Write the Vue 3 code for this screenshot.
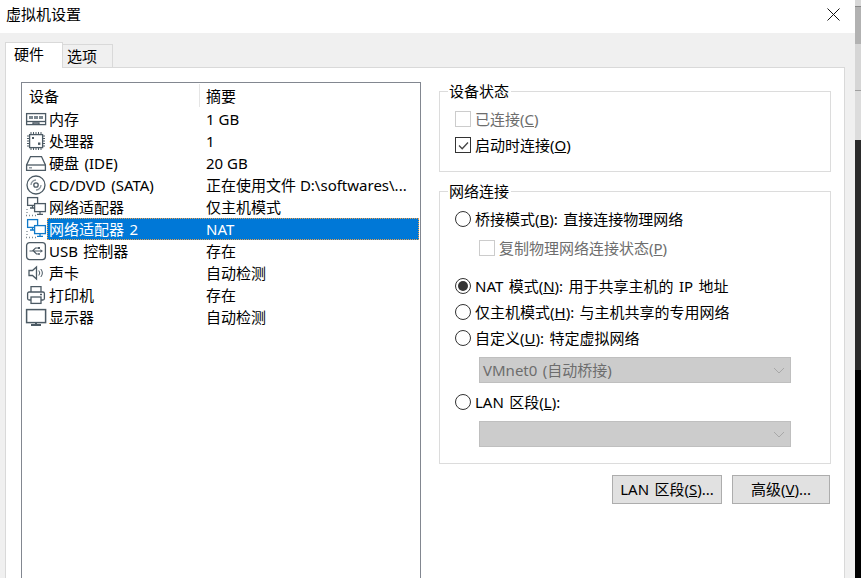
<script setup>
const rows = [
  { kind: 'ram', name: '内存', value: '1 GB' },
  { kind: 'cpu', name: '处理器', value: '1' },
  { kind: 'disk', name: '硬盘 (IDE)', value: '20 GB' },
  { kind: 'cd', name: 'CD/DVD (SATA)', value: '正在使用文件 D:\\softwares\\...' },
  { kind: 'net', name: '网络适配器', value: '仅主机模式' },
  { kind: 'net', name: '网络适配器 2', value: 'NAT', selected: true },
  { kind: 'usb', name: 'USB 控制器', value: '存在' },
  { kind: 'sound', name: '声卡', value: '自动检测' },
  { kind: 'printer', name: '打印机', value: '存在' },
  { kind: 'display', name: '显示器', value: '自动检测' },
]
</script>

<template>
  <div class="screen">
    <div class="window">
      <header class="titlebar">
        <span>虚拟机设置</span>
        <svg class="close" width="13" height="13" viewBox="0 0 13 13"><path d="M.5.5l12 12M12.5.5l-12 12" stroke="#111" stroke-width="1" fill="none" /></svg>
      </header>
      <div class="body">
        <div class="tabs">
          <div class="tab active">硬件</div>
          <div class="tab">选项</div>
        </div>
        <div class="pane">
          <div class="list">
            <div class="list-head">
              <div class="head-a">设备</div>
              <div class="head-b">摘要</div>
            </div>
            <div v-for="r in rows" :key="r.name" class="row">
              <div class="icon-cell">
                <svg width="22" height="22" viewBox="0 0 22 22" fill="none" stroke="#4c5a64" stroke-width="1.3">
                  <template v-if="r.kind === 'ram'">
                    <rect x="1.6" y="5.6" width="19" height="11" />
                    <path d="M1.6 13.5h19" />
                    <rect x="4" y="8" width="4" height="3" fill="#7b8790" stroke="none" />
                    <rect x="9" y="8" width="4" height="3" fill="#7b8790" stroke="none" />
                    <rect x="14" y="8" width="4" height="3" fill="#7b8790" stroke="none" />
                    <path d="M8 16.5v-1.5h6v1.5" />
                  </template>
                  <template v-else-if="r.kind === 'cpu'">
                    <rect x="4.6" y="4.6" width="13" height="13" />
                    <path d="M6 2v2M8.5 2v2M11 2v2M13.5 2v2M16 2v2M6 18v2M8.5 18v2M11 18v2M13.5 18v2M16 18v2M2 6h2M2 8.5h2M2 11h2M2 13.5h2M2 16h2M18 6h2M18 8.5h2M18 11h2M18 13.5h2M18 16h2" stroke-width="1" />
                    <rect x="7" y="7" width="2" height="2" fill="#4c5a64" stroke="none" />
                    <rect x="13" y="12.5" width="2.4" height="2.4" fill="#4c5a64" stroke="none" />
                  </template>
                  <template v-else-if="r.kind === 'disk'">
                    <path d="M5.5 4.6h11l3.9 8.4v5.4H1.6V13z" />
                    <path d="M1.6 13h18.8" />
                    <path d="M4 15.8h3" stroke="#7b8790" />
                  </template>
                  <template v-else-if="r.kind === 'cd'">
                    <circle cx="11" cy="11" r="9" />
                    <circle cx="11" cy="11" r="2.2" />
                    <path d="M6 11a5 5 0 0 1 5-5" stroke="#8a959d" />
                    <path d="M16 11a5 5 0 0 1-5 5" stroke="#8a959d" />
                  </template>
                  <template v-else-if="r.kind === 'net'">
                    <g :stroke="r.selected ? '#1079c9' : '#4c5a64'">
                      <rect x="2.6" y="1.6" width="10" height="7.8" />
                      <path d="M7.5 9.5v2M5 12h5" />
                      <rect x="9.6" y="7.6" width="10.8" height="8" fill="#fff" />
                      <path d="M15 15.5v2.5M12 18.4h6" />
                    </g>
                    <path d="M2 13v1M2 16v1M1 19.5h1M4 19.5h1M7 19.5h1M10 19.5h1" stroke="#7b8790" />
                  </template>
                  <template v-else-if="r.kind === 'usb'">
                    <rect x="1.6" y="2.6" width="18.8" height="17" rx="3" />
                    <path d="M4.5 11h11M7.5 11l3-3h3M8.5 11l3 3h2" stroke-width="1.1" />
                    <path d="M18 11l-2.6-1.8v3.6z" fill="#4c5a64" stroke="none" />
                    <rect x="13" y="7" width="2" height="2" fill="#4c5a64" stroke="none" />
                    <circle cx="14" cy="14" r="1" fill="#4c5a64" stroke="none" />
                  </template>
                  <template v-else-if="r.kind === 'sound'">
                    <path d="M4 8.5h3.5L11.5 5v12l-4-3.5H4z" />
                    <path d="M13.8 8.5a4 4 0 0 1 0 5M15.8 7a6.5 6.5 0 0 1 0 8" stroke-width="1" />
                  </template>
                  <template v-else-if="r.kind === 'printer'">
                    <path d="M6 8V2.6h10V8" />
                    <rect x="2.6" y="8" width="16.8" height="8" rx="1.5" />
                    <rect x="6" y="13" width="10" height="6.4" fill="#fff" />
                    <path d="M15 10.5h2" />
                  </template>
                  <template v-else>
                    <rect x="1.6" y="3.6" width="19" height="13" stroke-width="1.5" />
                    <path d="M6 19h10" stroke-width="2" />
                    <path d="M11 16.6v2" stroke-width="2" />
                  </template>
                </svg>
              </div>
              <div class="row-main" :class="{ selected: r.selected }">
                <div class="cell-a">{{ r.name }}</div>
                <div class="cell-b">{{ r.value }}</div>
              </div>
            </div>
          </div>

          <div class="side">
            <section class="group first">
              <div class="legend">设备状态</div>
              <label class="opt check disabled first-opt"><i class="box"></i><span>已连接(<u>C</u>)</span></label>
              <label class="opt check"><i class="box on"><svg width="15" height="15" viewBox="0 0 15 15"><path d="M3 7.5l3.2 3.2L12 4.5" fill="none" stroke="#444" stroke-width="1.3" /></svg></i><span>启动时连接(<u>O</u>)</span></label>
            </section>

            <section class="group second">
              <div class="legend">网络连接</div>
              <label class="opt radio bridged"><i class="dot"></i><span>桥接模式(<u>B</u>): 直接连接物理网络</span></label>
              <label class="opt check disabled sub"><i class="box"></i><span>复制物理网络连接状态(<u>P</u>)</span></label>
              <label class="opt radio nat"><i class="dot on"></i><span>NAT 模式(<u>N</u>): 用于共享主机的 IP 地址</span></label>
              <label class="opt radio"><i class="dot"></i><span>仅主机模式(<u>H</u>): 与主机共享的专用网络</span></label>
              <label class="opt radio"><i class="dot"></i><span>自定义(<u>U</u>): 特定虚拟网络</span></label>
              <div class="select first-select">
                <span>VMnet0 (自动桥接)</span>
                <svg width="12" height="7" viewBox="0 0 12 7"><path d="M1 1l5 5 5-5" fill="none" stroke="#a8a8a8" /></svg>
              </div>
              <label class="opt radio lan"><i class="dot"></i><span>LAN 区段(<u>L</u>):</span></label>
              <div class="select second-select">
                <span></span>
                <svg width="12" height="7" viewBox="0 0 12 7"><path d="M1 1l5 5 5-5" fill="none" stroke="#a8a8a8" /></svg>
              </div>
            </section>

            <div class="buttons">
              <button class="btn lan-btn"><span>LAN 区段(<u>S</u>)...</span></button>
              <button class="btn adv-btn"><span>高级(<u>V</u>)...</span></button>
            </div>
          </div>
        </div>
      </div>
    </div>
    <div class="strip">
      <div class="s1"></div>
      <div class="s2"></div>
      <div class="s3"></div>
      <div class="s4"></div>
      <div class="s5"></div>
      <div class="s6"></div>
    </div>
  </div>
</template>

<style scoped>
.screen {
  display: flex;
  width: 861px;
  height: 578px;
  overflow: hidden;
  background: #fff;
  color: #000;
  font-family: "Noto Sans", "Noto Sans CJK SC", sans-serif;
  font-size: 15px;
  word-spacing: 1.5px;
}
.window { width: 855px; display: flex; flex-direction: column; background: #f0f0f0; }
.titlebar {
  height: 33px;
  flex: none;
  background: #fff;
  display: flex;
  align-items: center;
  justify-content: space-between;
  padding: 0 15px 7px 6px;
  box-sizing: border-box;
}
.close { margin-top: 2px; }
.body { flex: 1; padding: 0 10px 0 5px; display: flex; flex-direction: column; min-height: 0; }
.tabs { height: 34px; flex: none; display: flex; align-items: flex-end; padding-top: 9px; box-sizing: border-box; position: relative; z-index: 1; }
.tab {
  box-sizing: border-box;
  width: 50px;
  height: 23px;
  border: 1px solid #d9d9d9;
  border-left: 0;
  border-bottom: 0;
  line-height: 23px;
  padding-left: 4px;
}
.tab.active {
  width: 58px;
  height: 26px;
  margin-bottom: -1px;
  background: #fff;
  border-left: 1px solid #d9d9d9;
  line-height: 22px;
  padding-left: 8px;
}
.pane {
  flex: 1;
  min-height: 0;
  box-sizing: border-box;
  background: #fff;
  border: 1px solid #d9d9d9;
  border-bottom: 0;
  padding: 14px 12px 0 15px;
  display: flex;
}
.list {
  box-sizing: border-box;
  width: 400px;
  height: 520px;
  flex: none;
  border: 1px solid #828790;
  padding-top: 1px;
}
.list-head { display: flex; height: 24px; line-height: 24px; }
.head-a { width: 178px; padding-left: 7px; box-sizing: border-box; border-right: 1px solid #e5e5e5; height: 23px; }
.head-b { padding-left: 6px; }
.row { display: flex; height: 22px; line-height: 22px; }
.icon-cell { width: 25px; flex: none; display: flex; align-items: center; }
.icon-cell svg { display: block; margin-left: 3px; flex: none; }
.row-main { display: flex; flex: 1; margin-right: 1px; box-sizing: border-box; border: 1px solid transparent; line-height: 20px; }
.row-main.selected { background: #0078d7; color: #fff; border: 1px dotted #e8a050; }
.cell-a { width: 157px; padding-left: 1px; }
.cell-b { white-space: nowrap; word-spacing: 0; }
.side { width: 392px; margin-left: 18px; display: flex; flex-direction: column; padding-top: 9px; }
.group { box-sizing: border-box; border: 1px solid #dcdcdc; display: flex; flex-direction: column; }
.group.first { height: 81px; }
.group.second { height: 273px; margin-top: 19px; }
.legend {
  align-self: flex-start;
  margin: -11px 0 0 8px;
  padding: 0 2px 0 1px;
  background: #fff;
  height: 20px;
  line-height: 20px;
}
.opt { display: flex; align-items: center; height: 26px; padding-left: 15px; white-space: pre; }
.opt > span { margin-bottom: 2px; }
.first-opt { margin-top: 5px; }
.disabled { color: #6d6d6d; }
.box {
  box-sizing: border-box;
  width: 16px;
  height: 16px;
  border: 1px solid #cccccc;
  margin-right: 4px;
  display: block;
  flex: none;
}
.box.on { border-color: #333; }
.box svg { display: block; }
.dot {
  box-sizing: border-box;
  width: 16px;
  height: 16px;
  border: 1px solid #333;
  border-radius: 50%;
  margin-right: 4px;
  flex: none;
  display: flex;
  align-items: center;
  justify-content: center;
}
.dot.on::after { content: ""; width: 10px; height: 10px; border-radius: 50%; background: #333; }
.bridged { margin-top: 5px; }
.sub { padding-left: 39px; margin-top: 3px; }
.nat { margin-top: 12px; }
.select {
  box-sizing: border-box;
  margin-left: 39px;
  width: 312px;
  height: 26px;
  background: #cccccc;
  border: 1px solid #bfbfbf;
  color: #6d6d6d;
  display: flex;
  align-items: center;
  justify-content: space-between;
  padding: 0 5px 0 3px;
}
.select > span { margin-bottom: 2px; }
.first-select { margin-top: 6px; }
.lan { margin-top: 6px; }
.second-select { margin-top: 6px; }
.buttons { display: flex; justify-content: flex-end; gap: 10px; margin-top: 11px; padding-right: 1px; }
.btn {
  box-sizing: border-box;
  height: 29px;
  background: #e1e1e1;
  border: 1px solid #adadad;
  font: inherit;
  word-spacing: inherit;
  color: #000;
  padding: 0 0 2px;
}
.lan-btn { width: 110px; }
.adv-btn { width: 98px; }
.strip { width: 6px; display: flex; flex-direction: column; }
.s1 { height: 7px; background: #d8d8d8; border-bottom: 1px solid #888; box-sizing: border-box; }
.s2 { height: 37px; background: #b2b2b2; }
.s3 { height: 47px; background: #d6d6d6; border-bottom: 1px solid #a0a0a0; box-sizing: border-box; }
.s4 { height: 49px; background: #dcdcdc; }
.s5 { height: 230px; background: #2b2b2b; }
.s6 { flex: 1; background: #000; }
</style>
